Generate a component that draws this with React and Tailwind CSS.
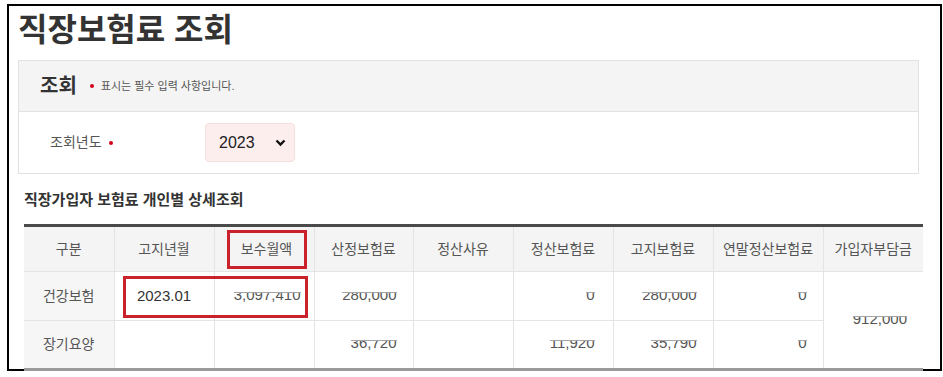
const font = { fontFamily: '"Liberation Sans", "Noto Sans CJK KR", sans-serif' };

const cols = [
  { label: '구분', w: 'w-[90px]' },
  { label: '고지년월', w: 'w-[100px]' },
  { label: '보수월액', w: 'w-[100px]' },
  { label: '산정보험료', w: 'w-[99px]' },
  { label: '정산사유', w: 'w-[100px]' },
  { label: '정산보험료', w: 'w-[100px]' },
  { label: '고지보험료', w: 'w-[100px]' },
  { label: '연말정산보험료', w: 'w-[110px]' },
  { label: '가입자부담금', w: 'w-[100px]' },
];

// masked number (top part hidden like the screenshot)
const Masked = ({ v }) => (
  <span className="inline-flex h-[10px] flex-col justify-end overflow-hidden border-t border-[#a5a5a5] align-middle">
    <span className="block text-[15px] leading-[15px] text-[#555]">{v}</span>
  </span>
);

const rows = [
  {
    name: '건강보험',
    ym: '2023.01',
    pay: '3,097,410',
    calc: '280,000',
    reason: '',
    settle: '0',
    notice: '280,000',
    year: '0',
  },
  {
    name: '장기요양',
    ym: '',
    pay: '',
    calc: '36,720',
    reason: '',
    settle: '11,920',
    notice: '35,790',
    year: '0',
  },
];

export default function App() {
  return (
    <div className="bg-white w-[943px] h-[377px] pt-[4px] pl-[7px]" style={font}>
      <div className="w-[935px] h-[367px] border-2 border-black pl-[9px] relative">
        <h1 className="text-[32px] leading-[44px] font-bold text-[#333] mt-[2px]">
          직장보험료 조회
        </h1>

        <div className="mt-[8px] w-[901px] border border-[#e2e2e2]">
          <div className="h-[51px] bg-[#f4f4f4] border-b border-[#e2e2e2] flex items-center pl-[21px]">
            <span className="text-[20px] font-bold text-[#333]">조회</span>
            <span className="ml-[13px] w-[4px] h-[4px] rounded-full bg-[#d0021b]" />
            <span className="ml-[7px] text-[11px] text-[#555]">표시는 필수 입력 사항입니다.</span>
          </div>
          <div className="h-[61px] flex items-center pl-[31px]">
            <span className="text-[14px] text-[#555] w-[56px]">조회년도</span>
            <span className="ml-[3px] w-[4px] h-[4px] rounded-full bg-[#d0021b]" />
            <div className="ml-[92px] w-[90px] h-[39px] rounded-[4px] bg-[#fdeeee] border border-[#f6dede] flex items-center pl-[13px] pr-[8px] justify-between">
              <span className="text-[16px] text-[#222]">2023</span>
              <svg width="11" height="8" viewBox="0 0 11 8">
                <path d="M1.5 1.5 L5.5 5.5 L9.5 1.5" fill="none" stroke="#111" strokeWidth="2.4" />
              </svg>
            </div>
          </div>
        </div>

        <h2 className="mt-[16px] ml-[6px] text-[15px] font-bold text-[#333] leading-[20px]">
          직장가입자 보험료 개인별 상세조회
        </h2>

        <table className="mt-[14px] ml-[6px] w-[899px] border-collapse table-fixed text-[14px]">
          <thead>
            <tr className="h-[46px] bg-[#f4f4f4] border-t-[3px] border-[#4a4a4a]">
              {cols.map((c, i) => (
                <th
                  key={c.label}
                  className={`${c.w} font-normal text-[#555] border-[#e4e4e4] ${i > 0 ? 'border-l' : ''} relative`}
                >
                  {i === 2 ? (
                    <span className="absolute left-[12px] right-[7px] top-[3px] bottom-[2px] border-[3px] border-[#c9222c] flex items-center justify-center">
                      {c.label}
                    </span>
                  ) : (
                    c.label
                  )}
                </th>
              ))}
            </tr>
          </thead>
          <tbody>
            {rows.map((r, ri) => (
              <tr
                key={r.name}
                className={`h-[49px] border-t border-[#e4e4e4] ${ri === 1 ? 'border-b-[3px] border-b-[#9a9a9a]' : ''}`}
              >
                <td className="bg-[#f6f6f6] text-center text-[#555]">{r.name}</td>
                <td className="border-l border-[#e4e4e4] text-center text-[#333] text-[15px] relative">
                  {r.ym}
                  {ri === 0 && (
                    <span className="absolute left-[8px] top-[4px] w-[185px] h-[42px] border-[3px] border-[#c9222c]" />
                  )}
                </td>
                <td className="border-l border-[#e4e4e4] text-right pr-[13px]">
                  {r.pay && <Masked v={r.pay} />}
                </td>
                <td className="border-l border-[#e4e4e4] text-right pr-[16px]">
                  <Masked v={r.calc} />
                </td>
                <td className="border-l border-[#e4e4e4]">{r.reason}</td>
                <td className="border-l border-[#e4e4e4] text-right pr-[18px]">
                  <Masked v={r.settle} />
                </td>
                <td className="border-l border-[#e4e4e4] text-right pr-[16px]">
                  <Masked v={r.notice} />
                </td>
                <td className="border-l border-[#e4e4e4] text-right pr-[16px]">
                  <Masked v={r.year} />
                </td>
                {ri === 0 && (
                  <td rowSpan={2} className="border-l border-[#e4e4e4] text-right pr-[16px]">
                    <Masked v="912,000" />
                  </td>
                )}
              </tr>
            ))}
          </tbody>
        </table>
      </div>
    </div>
  );
}
